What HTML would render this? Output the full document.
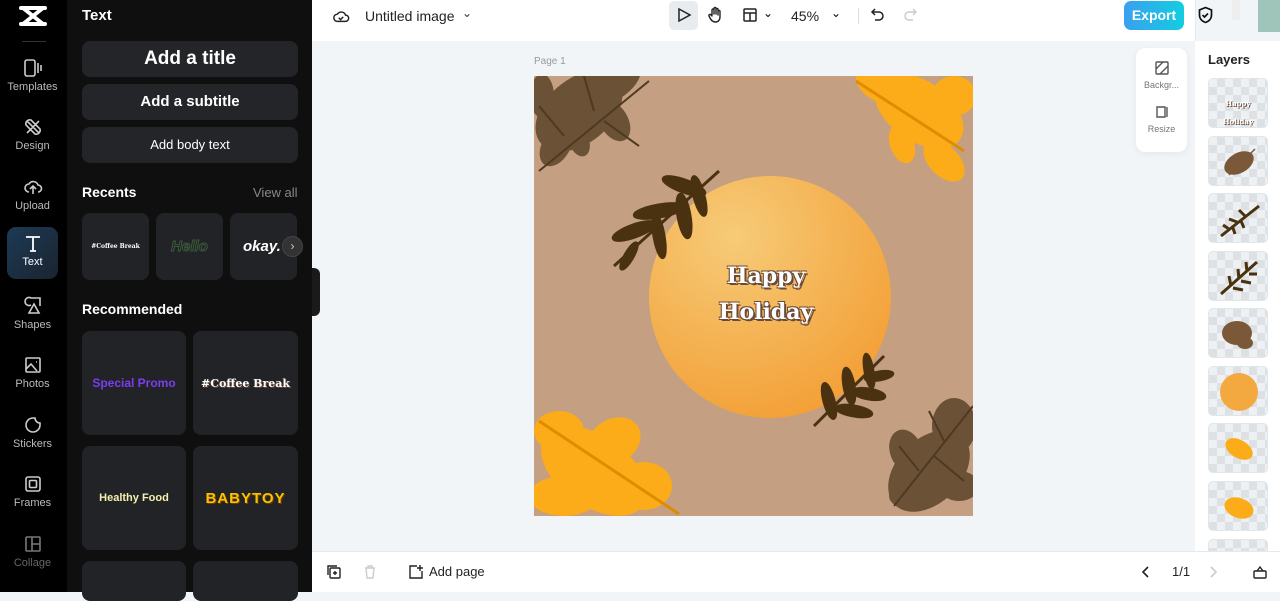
<!DOCTYPE html>
<html><head><meta charset="utf-8"><style>
*{box-sizing:border-box;margin:0;padding:0}
body{width:1280px;height:592px;overflow:hidden;font-family:"Liberation Sans",sans-serif;background:#f2f5f8;position:relative}
.abs{position:absolute}
.rail{left:0;top:0;width:67px;height:592px;background:#000}
.ri{position:absolute;left:7px;width:51px;height:52px;text-align:center;color:#bbb;font-size:11px}
.ri svg{display:block;margin:6px auto 3px}
.panel{left:67px;top:0;width:245px;height:592px;background:#0f0f10}
.btn{position:absolute;left:15px;width:216px;height:36px;background:#242528;border-radius:8px;color:#fff;font-weight:bold;text-align:center}
.card{position:absolute;background:#222327;border-radius:8px;display:flex;align-items:center;justify-content:center}
.top{left:312px;top:0;width:883px;height:41px;background:#fff}
.bot{left:312px;top:551px;width:968px;height:41px;background:#fff}
.layers{left:1195px;top:41px;width:85px;height:510px;background:#fff}
.lt{position:absolute;left:13px;width:60px;height:50px;border-radius:5px;border:1px solid #dfe7ea;
background-color:#eef1f3;background-image:linear-gradient(45deg,#dde1e4 25%,transparent 25%,transparent 75%,#dde1e4 75%),linear-gradient(45deg,#dde1e4 25%,transparent 25%,transparent 75%,#dde1e4 75%);background-size:16px 16px;background-position:0 0,8px 8px;overflow:hidden}
.ht{font-family:"DejaVu Serif","Liberation Serif",serif;font-weight:bold;color:#fff;text-shadow:2px 2px 0 #6b4a3a,-1px -1px 0 #6b4a3a,1px -1px 0 #6b4a3a,-1px 1px 0 #6b4a3a}
</style></head><body>
<div class="abs rail">
 <svg class="abs" style="left:17px;top:5px" width="32" height="22" viewBox="0 0 32 22"><path d="M4 3h24M4 19h24M6 3l20 16M26 3L6 19" stroke="#fff" stroke-width="4" fill="none" stroke-linecap="round"/></svg>
 <div class="abs" style="left:22px;top:41px;width:24px;height:1px;background:#333"></div>
 <div class="ri" style="top:52px"><svg width="20" height="20" viewBox="0 0 20 20" fill="none" stroke="#ccc" stroke-width="1.6"><rect x="2" y="2" width="10" height="16" rx="2"/><path d="M15 5v10M18 7v6"/></svg>Templates</div>
 <div class="ri" style="top:111px"><svg width="20" height="20" viewBox="0 0 20 20" fill="none" stroke="#ccc" stroke-width="1.6"><path d="M4 4l12 12M8 3a4 4 0 0 0-5 5l9 9a4 4 0 0 0 5-5zM16 4l-12 12"/></svg>Design</div>
 <div class="ri" style="top:171px"><svg width="20" height="20" viewBox="0 0 20 20" fill="none" stroke="#ccc" stroke-width="1.6"><path d="M6 15a4 4 0 0 1 0-8 5 5 0 0 1 9 1 3.5 3.5 0 0 1 0 7M10 17V10M7 12l3-3 3 3"/></svg>Upload</div>
 <div class="ri" style="top:227px;background:linear-gradient(135deg,#1d3a55,#1a2430);border-radius:9px;color:#fff"><svg width="20" height="20" viewBox="0 0 20 20" fill="none" stroke="#fff" stroke-width="1.8"><path d="M3 4h14M10 4v14M7 18h6"/></svg>Text</div>
 <div class="ri" style="top:290px"><svg width="20" height="20" viewBox="0 0 20 20" fill="none" stroke="#ccc" stroke-width="1.6"><path d="M8 9a4 4 0 1 1 0-7h9v8M6 17l5-9 5 9z"/></svg>Shapes</div>
 <div class="ri" style="top:349px"><svg width="20" height="20" viewBox="0 0 20 20" fill="none" stroke="#ccc" stroke-width="1.6"><rect x="3" y="3" width="14" height="14" rx="1"/><path d="M3 14l5-5 6 7M13 7h1"/></svg>Photos</div>
 <div class="ri" style="top:409px"><svg width="20" height="20" viewBox="0 0 20 20" fill="none" stroke="#ccc" stroke-width="1.6"><path d="M17 10a7 7 0 1 1-7-7h2a5 5 0 0 0 5 5z"/></svg>Stickers</div>
 <div class="ri" style="top:468px"><svg width="20" height="20" viewBox="0 0 20 20" fill="none" stroke="#ccc" stroke-width="1.6"><rect x="3" y="3" width="14" height="14" rx="2"/><rect x="6.5" y="6.5" width="7" height="7" rx="1"/></svg>Frames</div>
 <div class="ri" style="top:528px;color:#666"><svg width="20" height="20" viewBox="0 0 20 20" fill="none" stroke="#777" stroke-width="1.6"><rect x="3" y="3" width="14" height="14" rx="1"/><path d="M9 3v14M9 10h8"/></svg>Collage</div>
</div>
<div class="abs panel">
 <div class="abs" style="left:15px;top:7px;color:#fff;font-weight:bold;font-size:15px">Text</div>
 <div class="btn" style="top:41px;font-size:19px;line-height:36px">Add a title</div>
 <div class="btn" style="top:84px;font-size:15px;line-height:36px">Add a subtitle</div>
 <div class="btn" style="top:127px;font-size:13px;line-height:36px;font-weight:normal">Add body text</div>
 <div class="abs" style="left:15px;top:184px;color:#fff;font-weight:bold;font-size:14px">Recents</div>
 <div class="abs" style="left:186px;top:185px;color:#888;font-size:13px">View all</div>
 <div class="card" style="left:15px;top:213px;width:67px;height:67px"><span class="ht" style="font-size:6px;text-shadow:none">#Coffee Break</span></div>
 <div class="card" style="left:89px;top:213px;width:67px;height:67px"><span style="font-size:15px;font-style:italic;font-weight:bold;color:#222;-webkit-text-stroke:1px #3a5a3a">Hello</span></div>
 <div class="card" style="left:163px;top:213px;width:67px;height:67px;justify-content:flex-start;padding-left:13px"><span style="font-size:15px;font-style:italic;font-weight:bold;color:#fff">okay.</span></div>
 <div class="abs" style="left:215px;top:236px;width:21px;height:21px;border-radius:50%;background:#333;border:1px solid #444;color:#ccc;font-size:12px;text-align:center;line-height:19px">›</div>
 <div class="abs" style="left:15px;top:301px;color:#fff;font-weight:bold;font-size:14px">Recommended</div>
 <div class="card" style="left:15px;top:331px;width:104px;height:104px"><span style="color:#7b3df0;font-weight:bold;font-size:12px">Special Promo</span></div>
 <div class="card" style="left:126px;top:331px;width:105px;height:104px"><span class="ht" style="font-size:11px;text-shadow:1px 1px 0 #6b4a3a">#Coffee Break</span></div>
 <div class="card" style="left:15px;top:446px;width:104px;height:104px"><span style="color:#f5f0b0;font-weight:bold;font-size:11px">Healthy Food</span></div>
 <div class="card" style="left:126px;top:446px;width:105px;height:104px"><span style="color:#f6c400;font-weight:bold;font-size:15px;letter-spacing:1px;text-shadow:1px 1px 0 #7a3a00">BABYTOY</span></div>
 <div class="card" style="left:15px;top:561px;width:104px;height:40px"></div>
 <div class="card" style="left:126px;top:561px;width:105px;height:40px"></div>
</div>
<div class="abs" style="left:312px;top:268px;width:8px;height:48px;background:#1a1a1a;border-radius:0 6px 6px 0"></div>
<div class="abs top">
 <svg class="abs" style="left:20px;top:7px" width="18" height="18" viewBox="0 0 20 20" fill="none" stroke="#222" stroke-width="1.6"><path d="M6 16a4 4 0 0 1 0-8 5 5 0 0 1 9 1 3.5 3.5 0 0 1 0 7zM7.5 12l2 2 3-3"/></svg>
 <div class="abs" style="left:53px;top:8px;font-size:14px;color:#222">Untitled image</div>
 <div class="abs" style="left:150px;top:6px;font-size:12px;color:#333">⌄</div>
 <div class="abs" style="left:357px;top:1px;width:29px;height:29px;border-radius:5px;background:#e8ecef"></div>
 <svg class="abs" style="left:364px;top:7px" width="16" height="16" viewBox="0 0 16 16" fill="none" stroke="#222" stroke-width="1.5"><path d="M3 2l11 6-11 6z"/></svg>
 <svg class="abs" style="left:395px;top:6px" width="17" height="18" viewBox="0 0 17 18" fill="none" stroke="#222" stroke-width="1.4" stroke-linecap="round"><path d="M5 9V4a1 1 0 0 1 2 0v4M7 8V2.5a1 1 0 0 1 2 0V8M9 8V3.5a1 1 0 0 1 2 0V9M11 9V5.5a1 1 0 0 1 2 0V11c0 3-2 5-4.5 5S4.5 15 3 12l-1-2a1 1 0 0 1 2-1l1 1"/></svg>
 <svg class="abs" style="left:430px;top:7px" width="16" height="16" viewBox="0 0 16 16" fill="none" stroke="#222" stroke-width="1.5"><rect x="2" y="2" width="12" height="12" rx="1"/><path d="M2 6h12M8 6v8"/></svg>
 <div class="abs" style="left:451px;top:6px;font-size:12px">⌄</div>
 <div class="abs" style="left:479px;top:8px;font-size:14px;color:#222">45%</div>
 <div class="abs" style="left:519px;top:6px;font-size:12px">⌄</div>
 <div class="abs" style="left:546px;top:8px;width:1px;height:16px;background:#ddd"></div>
 <svg class="abs" style="left:558px;top:7px" width="16" height="16" viewBox="0 0 16 16" fill="none" stroke="#222" stroke-width="1.5"><path d="M5 2L2 5l3 3M2 5h7a4 4 0 0 1 0 8H5"/></svg>
 <svg class="abs" style="left:590px;top:7px" width="16" height="16" viewBox="0 0 16 16" fill="none" stroke="#ccc" stroke-width="1.5"><path d="M11 2l3 3-3 3M14 5H7a4 4 0 0 0 0 8h4"/></svg>
 <div class="abs" style="left:812px;top:1px;width:60px;height:29px;border-radius:7px;background:linear-gradient(90deg,#3aa0f0,#13cde0);color:#fff;font-weight:bold;font-size:14px;text-align:center;line-height:29px">Export</div>
 <svg class="abs" style="left:885px;top:6px" width="17" height="18" viewBox="0 0 17 18" fill="none" stroke="#111" stroke-width="1.7"><path d="M8.5 1.5l6 2.5v5c0 4-3 6.5-6 7.5-3-1-6-3.5-6-7.5V4zM5.5 9l2 2 3.5-3.5"/></svg>
</div>
<div class="abs" style="left:1232px;top:0;width:8px;height:20px;background:#eee"></div>
<div class="abs" style="left:1258px;top:0;width:22px;height:32px;background:#9fc4ba"></div>
<div class="abs" style="left:1195px;top:0;width:1px;height:551px;background:#e6e9ec"></div>
<div class="abs" style="left:534px;top:56px;font-size:10px;color:#999">Page 1</div>
<div class="abs" style="left:1136px;top:48px;width:51px;height:104px;background:#fff;border-radius:9px;box-shadow:0 2px 8px rgba(0,0,0,.06);text-align:center;font-size:9px;color:#777">
 <svg style="display:block;margin:12px auto 4px" width="16" height="16" viewBox="0 0 16 16" fill="none" stroke="#555" stroke-width="1.4"><rect x="2" y="2" width="12" height="12" rx="1"/><path d="M2 9l7-7M6 14l8-8"/></svg>Backgr...
 <svg style="display:block;margin:14px auto 4px" width="16" height="16" viewBox="0 0 16 16" fill="none" stroke="#555" stroke-width="1.4"><path d="M3 3h8v10H3zM13 3v10"/></svg>Resize
</div>
<svg class="abs" style="left:534px;top:76px" width="439" height="440" viewBox="0 0 439 440">
 <defs><radialGradient id="g" cx="0.35" cy="0.25" r="0.9"><stop offset="0" stop-color="#f6cb78"/><stop offset="1" stop-color="#f39a2e"/></radialGradient></defs>
 <rect width="439" height="440" fill="#c49f82"/>
 <circle cx="236" cy="221" r="121" fill="url(#g)"/>
 <g fill="#6b5136">
  <ellipse cx="45" cy="35" rx="50" ry="32" transform="rotate(-40 45 35)"/>
  <ellipse cx="75" cy="8" rx="35" ry="18" transform="rotate(-30 75 8)"/>
  <ellipse cx="80" cy="45" rx="22" ry="14" transform="rotate(60 80 45)"/>
  <ellipse cx="22" cy="70" rx="22" ry="14" transform="rotate(-60 22 70)"/>
  <ellipse cx="45" cy="65" rx="16" ry="10" transform="rotate(70 45 65)"/>
  <ellipse cx="8" cy="20" rx="12" ry="22"/>
  <ellipse cx="395" cy="395" rx="48" ry="32" transform="rotate(-45 395 395)"/>
  <ellipse cx="420" cy="350" rx="22" ry="28"/>
  <ellipse cx="372" cy="375" rx="22" ry="16" transform="rotate(70 372 375)"/>
  <ellipse cx="380" cy="420" rx="25" ry="14"/>
  <ellipse cx="425" cy="410" rx="20" ry="15"/>
 </g>
 <path d="M5 95L115 5M30 60l-25 -30M60 35l-10 -35M70 45l35 25" stroke="#4e3a22" stroke-width="2" fill="none"/>
 <path d="M360 430L439 330M385 395l-20 -25M410 365l-15 -30M400 380l30 25" stroke="#4e3a22" stroke-width="2" fill="none"/>
 <g fill="#fbac18">
  <ellipse cx="385" cy="35" rx="50" ry="30" transform="rotate(35 385 35)"/>
  <ellipse cx="345" cy="10" rx="25" ry="15" transform="rotate(30 345 10)"/>
  <ellipse cx="410" cy="85" rx="25" ry="15" transform="rotate(45 410 85)"/>
  <ellipse cx="368" cy="68" rx="20" ry="12" transform="rotate(70 368 68)"/>
  <ellipse cx="420" cy="20" rx="22" ry="20"/>
  <ellipse cx="60" cy="395" rx="60" ry="35" transform="rotate(35 60 395)"/>
  <ellipse cx="25" cy="355" rx="25" ry="20"/>
  <ellipse cx="80" cy="365" rx="28" ry="22" transform="rotate(-30 80 365)"/>
  <ellipse cx="110" cy="410" rx="28" ry="24"/>
  <ellipse cx="30" cy="420" rx="35" ry="20"/>
 </g>
 <path d="M322 5L430 75M5 345L145 438" stroke="#e08c00" stroke-width="3"/>
 <g stroke="#4a3210" stroke-width="3" fill="#4a3210">
  <path d="M80 190L185 95" fill="none"/>
  <ellipse cx="100" cy="155" rx="22" ry="6" transform="rotate(-20 100 155)"/>
  <ellipse cx="125" cy="135" rx="25" ry="6" transform="rotate(-10 125 135)"/>
  <ellipse cx="150" cy="110" rx="22" ry="6" transform="rotate(20 150 110)"/>
  <ellipse cx="125" cy="160" rx="22" ry="5" transform="rotate(80 125 160)"/>
  <ellipse cx="150" cy="140" rx="22" ry="6" transform="rotate(80 150 140)"/>
  <ellipse cx="165" cy="120" rx="20" ry="5" transform="rotate(75 165 120)"/>
  <ellipse cx="95" cy="180" rx="15" ry="4" transform="rotate(-60 95 180)"/>
  <path d="M280 350L350 280" fill="none"/>
  <ellipse cx="295" cy="325" rx="18" ry="5" transform="rotate(75 295 325)"/>
  <ellipse cx="315" cy="310" rx="18" ry="5" transform="rotate(80 315 310)"/>
  <ellipse cx="335" cy="295" rx="17" ry="4" transform="rotate(80 335 295)"/>
  <ellipse cx="320" cy="335" rx="18" ry="5" transform="rotate(10 320 335)"/>
  <ellipse cx="335" cy="318" rx="16" ry="5" transform="rotate(10 335 318)"/>
  <ellipse cx="345" cy="300" rx="14" ry="4" transform="rotate(-10 345 300)"/>
 </g>
</svg>
<div class="abs ht" style="left:650px;top:258px;width:232px;text-align:center;font-size:22px;line-height:36px">Happy<br>Holiday</div>
<div class="abs layers">
 <div class="abs" style="left:13px;top:11px;font-weight:bold;font-size:13px;color:#222">Layers</div>
 <div class="lt" style="top:37px;text-align:center;padding-top:14px"><span class="ht" style="font-size:7px;line-height:9px;text-shadow:1px 1px 0 #6b4a3a">Happy<br>Holiday</span></div>
 <div class="lt" style="top:95px"><svg width="60" height="50"><ellipse cx="30" cy="26" rx="16" ry="10" transform="rotate(-30 30 26)" fill="#7a5838"/><path d="M20 38L46 12" stroke="#7a5838" stroke-width="1.5"/></svg></div>
 <div class="lt" style="top:152px"><svg width="60" height="50" stroke="#4a3210" stroke-width="3"><path d="M12 42L50 12M20 35l-6-4M28 28l-8-3M36 22l-6-6M24 34l2 6M32 27l3 7"/></svg></div>
 <div class="lt" style="top:210px"><svg width="60" height="50" stroke="#4a3210" stroke-width="3"><path d="M12 42L48 10M22 34l-2-10M30 27l-1-10M38 20l-1-10M24 36l10 2M32 29l10 2M40 22l8 0"/></svg></div>
 <div class="lt" style="top:267px"><svg width="60" height="50"><ellipse cx="28" cy="24" rx="15" ry="12" fill="#7a5838"/><ellipse cx="36" cy="34" rx="8" ry="6" fill="#7a5838"/></svg></div>
 <div class="lt" style="top:325px"><svg width="60" height="50"><circle cx="30" cy="25" r="19" fill="#f4a940"/></svg></div>
 <div class="lt" style="top:382px"><svg width="60" height="50"><ellipse cx="30" cy="25" rx="15" ry="9" transform="rotate(30 30 25)" fill="#fbac18"/></svg></div>
 <div class="lt" style="top:440px"><svg width="60" height="50"><ellipse cx="30" cy="26" rx="15" ry="10" transform="rotate(20 30 26)" fill="#fbac18"/></svg></div>
 <div class="lt" style="top:498px"></div>
</div>
<div class="abs bot">
 <svg class="abs" style="left:14px;top:13px" width="16" height="16" viewBox="0 0 16 16" fill="none" stroke="#222" stroke-width="1.4"><rect x="4" y="4" width="10" height="10" rx="1"/><path d="M2 11V2h9M7 9h4M9 7v4"/></svg>
 <svg class="abs" style="left:50px;top:13px" width="16" height="16" viewBox="0 0 16 16" fill="none" stroke="#ccc" stroke-width="1.4"><path d="M3 4h10M6 4V2h4v2M4 4l1 10h6l1-10"/></svg>
 <svg class="abs" style="left:96px;top:13px" width="16" height="16" viewBox="0 0 16 16" fill="none" stroke="#222" stroke-width="1.4"><path d="M9 2H2v12h12V7M12 1v6M9 4h6"/></svg>
 <div class="abs" style="left:117px;top:13px;font-size:13px;color:#222">Add page</div>
 <svg class="abs" style="left:829px;top:14px" width="10" height="14" viewBox="0 0 10 14" fill="none" stroke="#222" stroke-width="1.6"><path d="M7 2L2 7l5 5"/></svg>
 <div class="abs" style="left:860px;top:13px;font-size:13px;color:#222">1/1</div>
 <svg class="abs" style="left:896px;top:14px" width="10" height="14" viewBox="0 0 10 14" fill="none" stroke="#ccc" stroke-width="1.6"><path d="M3 2l5 5-5 5"/></svg>
 <svg class="abs" style="left:940px;top:13px" width="16" height="16" viewBox="0 0 16 16" fill="none" stroke="#222" stroke-width="1.4"><rect x="2" y="7" width="12" height="7" rx="1"/><path d="M5 7l3-4 3 4"/></svg>
</div>
<div class="abs" style="left:312px;top:551px;width:968px;height:1px;background:#e6e9ec"></div>
</body></html>
